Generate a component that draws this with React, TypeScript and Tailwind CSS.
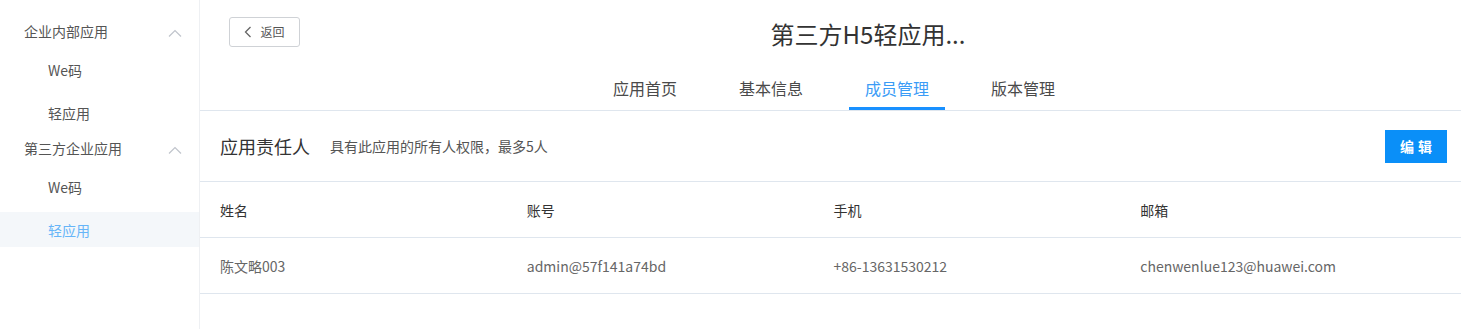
const ChevronUp = () => (
  <svg width="14" height="8" viewBox="0 0 14 8" fill="none" className="text-[#c0c4cc]">
    <path d="M1 7.5 7 1.5l6 6" stroke="currentColor" strokeWidth="1.2" />
  </svg>
);

const ChevronLeft = () => (
  <svg width="8" height="12" viewBox="0 0 8 12" fill="none" className="text-[#666]">
    <path d="M6.5 1 1.5 6l5 5" stroke="currentColor" strokeWidth="1.3" />
  </svg>
);

const groups = [
  { title: "企业内部应用", items: ["We码", "轻应用"], active: -1 },
  { title: "第三方企业应用", items: ["We码", "轻应用"], active: 1 },
];

const tabs = ["应用首页", "基本信息", "成员管理", "版本管理"];

const columns = ["姓名", "账号", "手机", "邮箱"];
const row = ["陈文略003", "admin@57f141a74bd", "+86-13631530212", "chenwenlue123@huawei.com"];

const Sidebar = () => (
  <aside className="w-[200px] shrink-0 border-r border-[#eef0f3] pt-[13px]">
    {groups.map((g) => (
      <div key={g.title}>
        <div className="h-[39px] flex items-center justify-between pl-6 pr-[17px] text-sm text-[#555]">
          <span className="-mt-1">{g.title}</span>
          <ChevronUp />
        </div>
        {g.items.map((item, i) => (
          <div
            key={item}
            className={`h-[35px] flex items-center pl-12 text-sm ${i > 0 ? "mt-2" : ""} ${
              g.active === i ? "bg-[#f4f7fa] text-[#66b5f8]" : "text-[#555]"
            }`}
          >
            {item}
          </div>
        ))}
      </div>
    ))}
  </aside>
);

export default function App() {
  return (
    <div
      className="flex h-[329px] w-[1461px] bg-white overflow-hidden"
      style={{ fontFamily: '"Noto Sans CJK SC", "Noto Sans", sans-serif' }}
    >
      <Sidebar />
      <main className="flex-1 min-w-0">
        <div className="border-b border-[#dfe6ee]">
          <div className="relative h-[68px] flex items-center justify-center">
            <button className="absolute left-[29px] top-[17px] h-[30px] w-[71px] flex items-center justify-center gap-2 border border-[#cfd2d6] rounded-[3px] text-xs text-[#555]">
              <ChevronLeft />
              <span>返回</span>
            </button>
            <h1 className="ml-[75px] text-2xl text-[#333] leading-none">第三方H5轻应用...</h1>
          </div>
          <div className="flex justify-center gap-[30px] pl-[7px]">
            {tabs.map((t, i) => (
              <div
                key={t}
                className={`w-24 h-[42px] flex items-center justify-center text-base ${
                  i === 2 ? "text-[#3b9cf6] border-b-[3px] border-[#1890ff]" : "text-[#4a4a4a] border-b-[3px] border-transparent"
                }`}
              >
                {t}
              </div>
            ))}
          </div>
        </div>

        <div className="flex items-center h-[71px] pl-5 pr-[14px] border-b border-[#dfe6ee]">
          <span className="text-lg text-[#333]">应用责任人</span>
          <span className="ml-5 text-sm text-[#555]">具有此应用的所有人权限，最多5人</span>
          <button className="ml-auto h-[33px] w-[62px] bg-[#0a8ff8] text-white text-sm font-semibold tracking-[4px] pl-1">
            编辑
          </button>
        </div>

        <div className="grid grid-cols-4 h-[56px] items-center pl-5 pr-[14px] border-b border-[#dfe6ee] text-sm text-[#333]">
          {columns.map((c) => (
            <span key={c}>{c}</span>
          ))}
        </div>
        <div className="grid grid-cols-4 h-[56px] items-center pl-5 pr-[14px] border-b border-[#dfe6ee] text-sm text-[#666]">
          {row.map((c) => (
            <span key={c}>{c}</span>
          ))}
        </div>
      </main>
    </div>
  );
}
